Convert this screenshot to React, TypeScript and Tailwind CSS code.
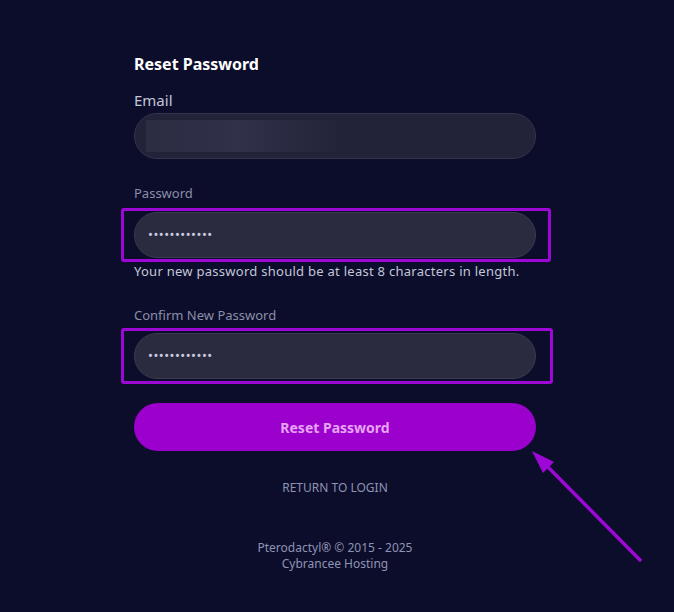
export default function App() {
  const dots = '••••••••••••'

  return (
    <div
      className="relative h-[612px] w-[674px] overflow-hidden bg-[#0c0d2b]"
      style={{ fontFamily: '"Noto Sans", "Open Sans", sans-serif' }}
    >
      <div className="ml-[134px] w-[402px] pt-[51px]">
        <h1 className="text-[16px] font-bold leading-[26px] text-white">Reset Password</h1>

        <label className="mt-[13px] block text-[15px] leading-[20px] text-[#c3c6d8]">Email</label>
        <div className="mt-[3px] flex h-[46px] items-center rounded-full border border-[#34354c] bg-[#222238] pl-[11px]">
          <div className="h-[32px] w-[190px] bg-gradient-to-r from-[#2c2d43] via-[#30314a] to-[#232339]" />
        </div>

        <label className="mt-[25px] block text-[13px] leading-[18px] text-[#8b8ea9]">Password</label>
        <div className="relative mt-[10px]">
          <div className="flex h-[46px] items-center rounded-full border border-[#3a3b50] bg-[#2b2b40] px-[13px] text-[13px] tracking-[0.5px] text-[#c9cbe0]">
            {dots}
          </div>
          <div className="pointer-events-none absolute left-[-13px] right-[-15px] top-[-4px] bottom-[-4px] rounded-[3px] border-[3px] border-[#9e08d6]" />
        </div>
        <p className="mt-[4px] text-[13px] leading-[18px] tracking-[0.27px] text-[#c3c6d8]">
          Your new password should be at least 8 characters in length.
        </p>

        <label className="mt-[26px] block text-[13px] leading-[18px] text-[#8b8ea9]">Confirm New Password</label>
        <div className="relative mt-[9px]">
          <div className="flex h-[46px] items-center rounded-full border border-[#3a3b50] bg-[#2b2b40] px-[13px] text-[13px] tracking-[0.5px] text-[#c9cbe0]">
            {dots}
          </div>
          <div className="pointer-events-none absolute left-[-13px] right-[-17px] top-[-5px] bottom-[-5px] rounded-[3px] border-[3px] border-[#9e08d6]" />
        </div>

        <button className="mt-[24px] h-[48px] w-full rounded-full bg-[#9b00cc] text-[14px] font-bold text-[#e7a4f4]">
          Reset Password
        </button>

        <div className="mt-[29px] text-center text-[12px] leading-[16px] text-[#8f93b4]">RETURN TO LOGIN</div>

        <div className="mt-[44px] text-center text-[12px] leading-[16px] text-[#8f93b4]">
          <div>Pterodactyl® © 2015 - 2025</div>
          <div>Cybrancee Hosting</div>
        </div>
      </div>

      <svg className="pointer-events-none absolute left-0 top-0" width="674" height="612">
        <line x1="640" y1="560" x2="543" y2="462" stroke="#9e08d6" strokeWidth="3.5" strokeLinecap="round" />
        <polygon points="532,451 554,462 543,473" fill="#9e08d6" />
      </svg>
    </div>
  )
}
